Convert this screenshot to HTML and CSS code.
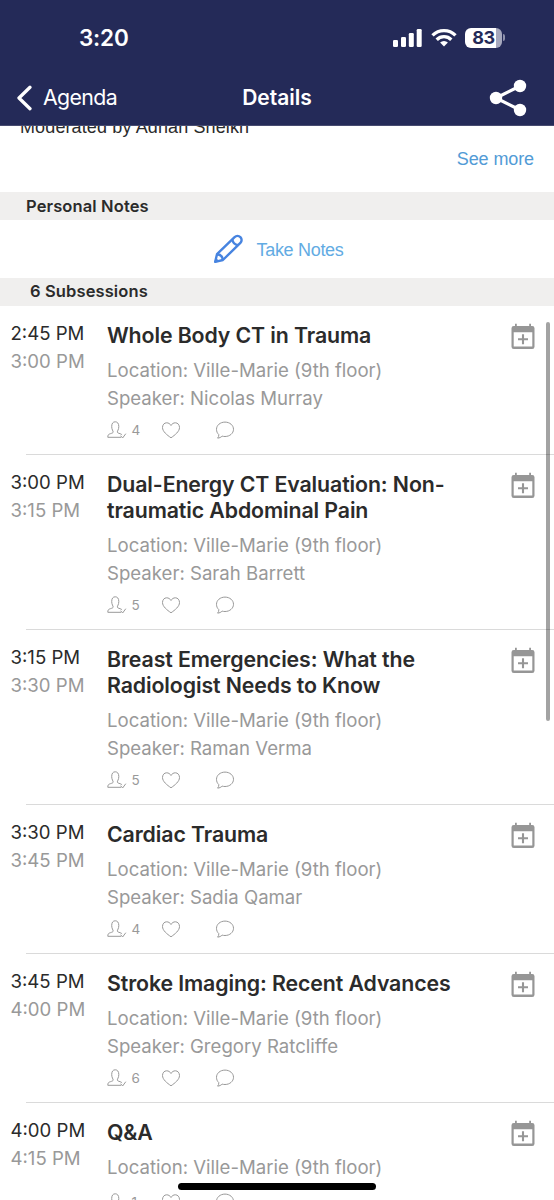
FILE: index.html
```html
<!DOCTYPE html>
<html lang="en">
<head>
<meta charset="utf-8">
<title>Details</title>
<link rel="stylesheet" href="styles.css">
</head>
<body>
<svg class="defs" width="0" height="0">
  <symbol id="calendar" viewBox="0 0 24 26">
    <path d="M4 3V.8h1.800V3h12.400V.8H20V3h1.200A2.300 2.300 0 0 1 23.500 5.300V23.700A2.300 2.300 0 0 1 21.200 26H2.800A2.300 2.300 0 0 1 .5 23.700V5.300A2.300 2.300 0 0 1 2.800 3zM2.700 9.300V23.600H21.300V9.300z" fill="#969696" fill-rule="evenodd"/>
    <path d="M12 11.300v10M7 16.300h10" stroke="#969696" stroke-width="2.100"/>
  </symbol>
  <symbol id="person" viewBox="0 0 20 18">
    <path d="M14 16.300H.8c0-2.500.7-3 2.600-3.600 1.800-.6 2.800-.9 2.800-1.700 0-1-1.500-2.400-1.500-5.500C4.700 2.400 6 .8 8.200.8S11.800 2.400 11.800 5.500c0 3.100-1.500 4.500-1.500 5.500 0 .8 1 1.100 2.800 1.700 1 .3 1.600.7 2 1.300M13.600 14.700l2 2.300L18.800 12.700"/>
  </symbol>
  <symbol id="heart" viewBox="0 0 20 18">
    <path d="M10 16.800C6 14 1.500 10.500 1.500 6.500 1.500 3.800 3.300 1.800 5.600 1.800c1.900 0 3.500 1 4.400 2.700.9-1.700 2.500-2.700 4.400-2.700 2.300 0 4.100 2 4.100 4.700 0 4-4.500 7.500-8.500 10.300z"/>
  </symbol>
  <symbol id="bubble" viewBox="0 0 20 18">
    <path d="M10 1.100c4.800 0 8.500 3.200 8.500 7.200s-3.700 7.200-8.500 7.200c-1 0-2-.1-2.900-.4-1.200 1.200-2.500 1.900-4.500 2 .9-.9 1.300-2.100 1.200-3.500C2.300 12.300 1.500 10.400 1.500 8.300c0-4 3.700-7.200 8.500-7.200z"/>
  </symbol>
</svg>

<div class="phone">
  <header class="header">
    <div class="status">
      <span class="clock">3:20</span>
      <div class="indicators">
        <svg class="signal" viewBox="0 0 29 18"><g fill="#fff"><rect x="0" y="11" width="5" height="7" rx="1.300"/><rect x="8" y="8" width="5" height="10" rx="1.300"/><rect x="15.800" y="4" width="5" height="14" rx="1.300"/><rect x="23.700" y="0" width="5" height="18" rx="1.300"/></g></svg>
        <svg class="wifi" viewBox="0 0 26 19"><g fill="none" stroke="#fff" stroke-width="3.300"><path d="M1.500 7.300a16.300 16.300 0 0 1 23 0"/><path d="M5.700 11.700a10.400 10.400 0 0 1 14.600 0"/></g><path d="M13 18.500l-3.900-4a5.600 5.600 0 0 1 7.800 0z" fill="#fff"/></svg>
        <div class="battery"><span class="battery-level">83</span><span class="battery-tip"></span></div>
      </div>
    </div>
    <nav class="nav">
      <a class="back"><svg class="chevron" viewBox="0 0 16 26"><path d="M14 2.300L3 13 14 23.700" fill="none" stroke="#fff" stroke-width="3.300" stroke-linecap="round" stroke-linejoin="round"/></svg><span>Agenda</span></a>
      <h1 class="nav-title">Details</h1>
      <svg class="share" viewBox="0 0 38 38"><path d="M31 7L7 19l24 12" fill="none" stroke="#fff" stroke-width="3.300"/><g fill="#fff"><circle cx="31" cy="7" r="6.200"/><circle cx="7" cy="19" r="6.200"/><circle cx="31" cy="31" r="6.200"/></g></svg>
    </nav>
  </header>

  <section class="summary">
    <p class="moderator">Moderated by Adnan Sheikh</p>
    <a class="more">See more</a>
  </section>

  <h2 class="bar">Personal Notes</h2>
  <div class="notes">
    <svg class="pencil" viewBox="0 0 30 30"><g fill="none" stroke="#4784e0" stroke-width="2.400" stroke-linejoin="round"><path d="M2.200 27.800L4 20.200 21.600 3.100a4.100 4.100 0 0 1 5.800 5.800L9.900 26z"/><path d="M19.300 5.400c.4 3 2.700 5.300 5.800 5.800M4 20.200c3.300.2 5.500 2.500 5.900 5.800"/></g><path d="M1.200 28.800l1.400-5.400 4 4z" fill="#4784e0"/></svg>
    <a class="take">Take Notes</a>
  </div>
  <h2 class="bar bar-sub">6 Subsessions</h2>

  <main class="list">
    <article class="row">
      <div class="times"><div>2:45 PM</div><div class="end">3:00 PM</div></div>
      <div class="body"><h3>Whole Body CT in Trauma</h3><p>Location: Ville-Marie (9th floor)</p><p>Speaker: Nicolas Murray</p>
        <div class="actions"><svg><use href="#person"/></svg><span>4</span><svg><use href="#heart"/></svg><svg><use href="#bubble"/></svg></div></div>
      <svg class="add"><use href="#calendar"/></svg>
    </article>
    <article class="row">
      <div class="times"><div>3:00 PM</div><div class="end">3:15 PM</div></div>
      <div class="body"><h3>Dual-Energy CT Evaluation: Non-<br>traumatic Abdominal Pain</h3><p>Location: Ville-Marie (9th floor)</p><p>Speaker: Sarah Barrett</p>
        <div class="actions"><svg><use href="#person"/></svg><span>5</span><svg><use href="#heart"/></svg><svg><use href="#bubble"/></svg></div></div>
      <svg class="add"><use href="#calendar"/></svg>
    </article>
    <article class="row">
      <div class="times"><div>3:15 PM</div><div class="end">3:30 PM</div></div>
      <div class="body"><h3>Breast Emergencies: What the<br>Radiologist Needs to Know</h3><p>Location: Ville-Marie (9th floor)</p><p>Speaker: Raman Verma</p>
        <div class="actions"><svg><use href="#person"/></svg><span>5</span><svg><use href="#heart"/></svg><svg><use href="#bubble"/></svg></div></div>
      <svg class="add"><use href="#calendar"/></svg>
    </article>
    <article class="row">
      <div class="times"><div>3:30 PM</div><div class="end">3:45 PM</div></div>
      <div class="body"><h3>Cardiac Trauma</h3><p>Location: Ville-Marie (9th floor)</p><p>Speaker: Sadia Qamar</p>
        <div class="actions"><svg><use href="#person"/></svg><span>4</span><svg><use href="#heart"/></svg><svg><use href="#bubble"/></svg></div></div>
      <svg class="add"><use href="#calendar"/></svg>
    </article>
    <article class="row">
      <div class="times"><div>3:45 PM</div><div class="end">4:00 PM</div></div>
      <div class="body"><h3>Stroke Imaging: Recent Advances</h3><p>Location: Ville-Marie (9th floor)</p><p>Speaker: Gregory Ratcliffe</p>
        <div class="actions"><svg><use href="#person"/></svg><span>6</span><svg><use href="#heart"/></svg><svg><use href="#bubble"/></svg></div></div>
      <svg class="add"><use href="#calendar"/></svg>
    </article>
    <article class="row">
      <div class="times"><div>4:00 PM</div><div class="end">4:15 PM</div></div>
      <div class="body"><h3>Q&amp;A</h3><p>Location: Ville-Marie (9th floor)</p>
        <div class="actions actions-short"><svg><use href="#person"/></svg><span>1</span><svg><use href="#heart"/></svg><svg><use href="#bubble"/></svg></div></div>
      <svg class="add"><use href="#calendar"/></svg>
    </article>
  </main>

  <div class="scrollbar"></div>
  <div class="home"></div>
</div>
</body>
</html>
```

FILE: styles.css
```css
* { box-sizing: border-box; margin: 0; padding: 0; }
body { background: #fff; overflow: hidden; font-family: Inter, "Liberation Sans", sans-serif; }
svg { display: block; flex: none; }
.defs { position: absolute; }
.phone { position: relative; width: 554px; height: 1200px; overflow: hidden; color: #2b2b2b; }

.header { height: 126px; background: #242a58; color: #fff; border-bottom: 1px solid #474b70; }
.status { height: 70px; padding: 5px 49px 0 79px; display: flex; align-items: center; justify-content: space-between; }
.clock { font-size: 22.500px; font-weight: 600; line-height: 28px; letter-spacing: -0.200px; padding-top: 1px; }
.indicators { display: flex; align-items: center; }
.signal { width: 29px; height: 18px; margin-top: 1px; }
.wifi { width: 26px; height: 19px; margin: 0 8px 0 9px; }
.battery { display: flex; align-items: center; gap: 1px; }
.battery-level { width: 37px; height: 20px; border-radius: 6px; background: linear-gradient(90deg, #fff 31px, #a6a8bd 31px); color: #242a58; font-size: 18px; line-height: 20px; font-weight: 700; text-align: center; letter-spacing: -0.400px; }
.battery-tip { width: 2px; height: 7px; border-radius: 0 2px 2px 0; background: #8f92ac; }
.nav { height: 55px; display: grid; grid-template-columns: 1fr auto 1fr; align-items: center; padding: 0 27px 0 16px; }
.back { display: flex; align-items: center; gap: 11px; font-size: 21.300px; letter-spacing: -0.600px; }
.back span { margin-top: -1px; }
.chevron { width: 16px; height: 26px; }
.nav-title { font-size: 21px; font-weight: 600; line-height: 28px; margin-left: 11px; }
.share { width: 38px; height: 38px; justify-self: end; }

.summary { height: 66px; padding: 0 20px; overflow: hidden; display: flex; flex-direction: column; font-family: "Liberation Sans", sans-serif; }
.moderator { font-size: 18px; line-height: 20px; margin-top: -9px; height: 20px; letter-spacing: 0.120px; }
.more { align-self: flex-end; margin-top: 11px; font-size: 18px; line-height: 22px; letter-spacing: -0.100px; color: #529bd6; }
.bar { height: 28px; background: #f0efee; padding-left: 26px; font-size: 16.500px; font-weight: 600; line-height: 28px; letter-spacing: 0.120px; }
.bar-sub { padding-left: 30px; line-height: 27px; }
.notes { height: 58px; display: flex; align-items: center; justify-content: center; gap: 13px; padding-left: 3px; }
.pencil { width: 30px; height: 30px; }
.take { font-family: "Liberation Sans", sans-serif; font-size: 18px; letter-spacing: -0.300px; color: #62abe3; padding-top: 2px; }

.row { position: relative; display: flex; align-items: flex-start; padding: 16px 19px 0 11px; }
.row::after { content: ""; position: absolute; left: 26px; right: 0; bottom: 0; height: 1px; background: #dadada; }
.times { width: 96px; flex: none; margin-top: -3px; font-size: 18.600px; line-height: 28.400px; color: #2b2b2b; white-space: nowrap; text-indent: -0.500px; }
.end { color: #999; }
.body { flex: 1; }
h3 { font-size: 21.300px; line-height: 26px; font-weight: 600; letter-spacing: -0.100px; white-space: nowrap; margin-bottom: 8px; }
.body p { font-size: 18.600px; line-height: 28.400px; color: #999; white-space: nowrap; }
.actions { display: flex; align-items: center; height: 42.200px; padding-bottom: 8.500px; }
.actions-short { margin-top: 4px; }
.actions svg { width: 20px; height: 18px; fill: none; stroke: #999; stroke-width: 1; }
.actions span { width: 29px; margin-left: 4.500px; font-size: 13.500px; line-height: 18px; color: #999; }
.actions svg + svg { margin-left: 34px; }
.add { width: 24px; height: 26px; margin-top: 1px; }

.scrollbar { position: absolute; left: 546px; top: 322px; width: 4px; height: 399px; border-radius: 2px; background: rgba(0, 0, 0, 0.36); }
.home { position: absolute; left: 178px; top: 1183px; width: 198px; height: 7px; border-radius: 4px; background: #000; }
```
